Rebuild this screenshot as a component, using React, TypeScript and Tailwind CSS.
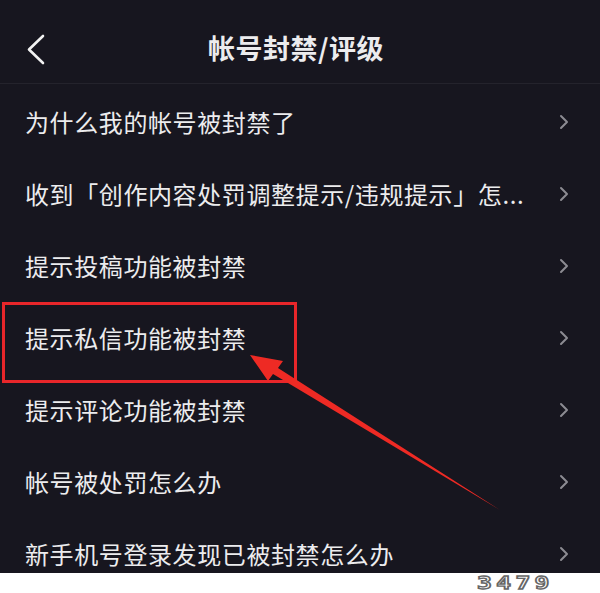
import { ChevronRight } from "lucide-react";

const items = [
  "为什么我的帐号被封禁了",
  "收到「创作内容处罚调整提示/违规提示」怎...",
  "提示投稿功能被封禁",
  "提示私信功能被封禁",
  "提示评论功能被封禁",
  "帐号被处罚怎么办",
  "新手机号登录发现已被封禁怎么办",
];

export default function App() {
  return (
    <div
      className="relative h-[593px] w-[600px] overflow-hidden bg-[#17161f] text-[#ececee]"
      style={{ fontFamily: '"Noto Sans CJK SC", "Noto Sans", sans-serif' }}
    >
      {/* Header */}
      <div className="relative flex h-[84px] items-center justify-center border-b border-[#24232c] pt-[14px]">
        <svg className="absolute left-[26px] top-[34px] h-[32px] w-[20px]" viewBox="0 0 20 32" fill="none">
          <path d="M17 2 L3 15.5 L17 29" stroke="#f2f2f2" strokeWidth="2.6" strokeLinecap="round" strokeLinejoin="round" />
        </svg>
        <h1 className="mr-[8px] text-[27px] font-semibold leading-normal tracking-[0.5px]">帐号封禁/评级</h1>
      </div>

      {/* List */}
      <div className="flex flex-col pt-[2px]">
        {items.map((t) => (
          <div key={t} className="flex h-[72px] items-center pl-[25px] pr-[24px]">
            <span className="flex-1 whitespace-nowrap text-[24px] leading-normal tracking-[0.6px]">{t}</span>
            <ChevronRight className="h-[26px] w-[24px] text-[#8c8b92]" strokeWidth={2} />
          </div>
        ))}
      </div>

      {/* Red highlight box */}
      <div className="absolute left-[2px] top-[302px] h-[81px] w-[295px] border-[3px] border-[#e8262a]" />

      {/* Red arrow */}
      <svg className="absolute left-0 top-0 h-[593px] w-[600px]" viewBox="0 0 600 593">
        <polygon points="250,355 283,361 278,368 500,510 273,374 268,381" fill="#ee2a24" />
      </svg>

      {/* Watermark strip */}
      <div className="absolute bottom-0 left-0 flex h-[20px] w-full items-center bg-white pl-[477px]">
        <span
          className="inline-block origin-left scale-x-[1.45] text-[17px] font-bold leading-none tracking-[3px] text-white"
          style={{ WebkitTextStroke: "1.3px #666", fontFamily: '"DejaVu Sans Mono", monospace' }}
        >
          3479
        </span>
      </div>
    </div>
  );
}
